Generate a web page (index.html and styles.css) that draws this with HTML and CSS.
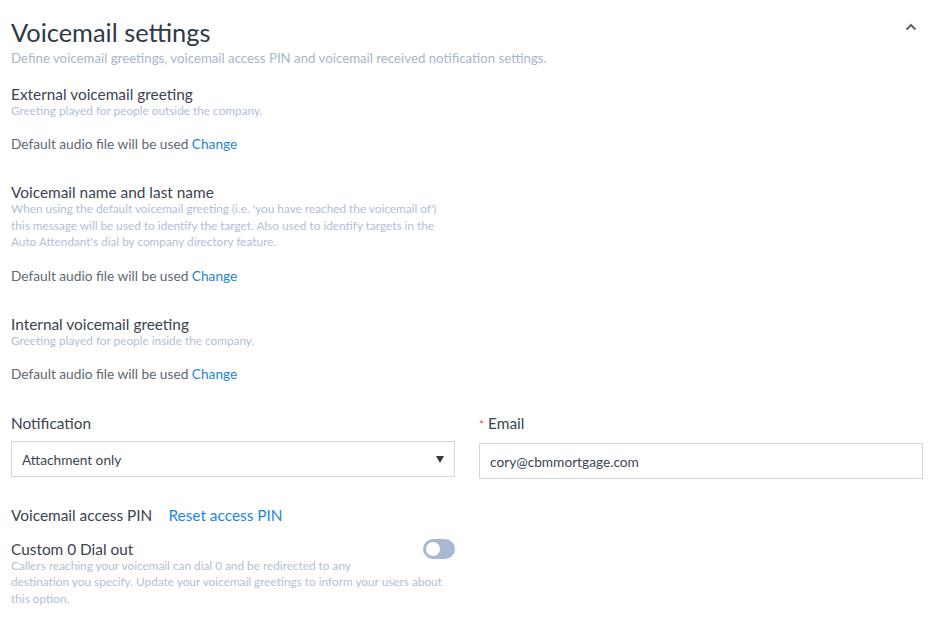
FILE: index.html
```html
<!DOCTYPE html>
<html>
<head>
<meta charset="utf-8">
<link rel="stylesheet" href="styles.css">
</head>
<body>
<div class="page">
  <div class="header">
    <div>
      <h1 class="title">Voicemail settings</h1>
      <p class="subtitle">Define voicemail greetings, voicemail access PIN and voicemail received notification settings.</p>
    </div>
    <svg class="chev" width="14" height="10" viewBox="0 0 14 10"><path d="M2.5 7.5 L7 3 L11.5 7.5" fill="none" stroke="#56677a" stroke-width="2"/></svg>
  </div>

  <div class="section s1">
    <div class="sec-title">External voicemail greeting</div>
    <div class="sec-desc">Greeting played for people outside the company.</div>
    <div class="audio">Default audio file will be used <a class="link">Change</a></div>
  </div>

  <div class="section s2">
    <div class="sec-title">Voicemail name and last name</div>
    <div class="sec-desc">When using the default voicemail greeting (i.e. 'you have reached the voicemail of') this message will be used to identify the target. Also used to identify targets in the Auto Attendant's dial by company directory feature.</div>
    <div class="audio">Default audio file will be used <a class="link">Change</a></div>
  </div>

  <div class="section s3">
    <div class="sec-title">Internal voicemail greeting</div>
    <div class="sec-desc">Greeting played for people inside the company.</div>
    <div class="audio">Default audio file will be used <a class="link">Change</a></div>
  </div>

  <div class="fields">
    <div class="field">
      <div class="label">Notification</div>
      <div class="select"><span>Attachment only</span><span class="caret"></span></div>
    </div>
    <div class="field">
      <div class="label"><span class="req">*</span> Email</div>
      <div class="input">cory@cbmmortgage.com</div>
    </div>
  </div>

  <div class="pin">
    <span>Voicemail access PIN</span>
    <a class="link">Reset access PIN</a>
  </div>

  <div class="dial">
    <div class="dial-top">
      <div class="sec-title">Custom 0 Dial out</div>
      <div class="toggle"><div class="knob"></div></div>
    </div>
    <div class="sec-desc">Callers reaching your voicemail can dial 0 and be redirected to any<br>destination you specify. Update your voicemail greetings to inform your users about this option.</div>
  </div>
</div>
</body>
</html>
```
FILE: styles.css
```css
* { box-sizing: border-box; }
body {
  margin: 0;
  background: #fff;
  font-family: "Lato", "Open Sans", sans-serif;
  color: #3a4452;
}
.page {
  padding: 16px 13px 0 11px;
}
.header {
  display: flex;
  justify-content: space-between;
  align-items: flex-start;
}
.title {
  margin: 0;
  font-size: 25.4px;
  font-weight: 400;
  line-height: 32px;
  color: #2e3947;
}
.subtitle {
  margin: 1px 0 0;
  font-size: 13.25px;
  line-height: 18px;
  color: #a7b6cc;
}
.chev { margin-top: 6px; margin-right: 5px; }
.section { width: 444px; margin-top: 18px; }
.section.s2, .section.s3 { margin-top: 30px; }
.sec-title {
  font-size: 15.4px;
  line-height: 18px;
  color: #3a4452;
}
.sec-desc {
  font-size: 11.8px;
  line-height: 16.4px;
  color: #b2c0d4;
}
.audio {
  margin-top: 16px;
  font-size: 13.7px;
  line-height: 18px;
  color: #5d6874;
}
.link { color: #1e86d8; text-decoration: none; cursor: pointer; }
.fields {
  display: grid;
  grid-template-columns: 444px 444px;
  column-gap: 24px;
  margin-top: 31px;
}
.label {
  font-size: 15.4px;
  line-height: 18px;
  color: #3a4452;
  margin-bottom: 9px;
}
.req { color: #e8474b; font-size: 12px; }
.select, .input {
  height: 36px;
  border: 1px solid #cfd8e4;
  display: flex;
  align-items: center;
  justify-content: space-between;
  padding: 0 10px;
  font-size: 13.7px;
  color: #3c4550;
}
.input { margin-top: 1px; }
.caret {
  width: 0; height: 0;
  border-left: 4.5px solid transparent;
  border-right: 4.5px solid transparent;
  border-top: 7px solid #333b44;
  margin-right: 0;
}
.pin {
  margin-top: 27px;
  font-size: 15.4px;
  line-height: 18px;
  display: flex;
  gap: 16px;
  color: #3a4452;
}
.dial { width: 444px; margin-top: 16px; }
.dial-top { display: flex; justify-content: space-between; align-items: center; height: 18px; }
.toggle {
  width: 32px; height: 20px;
  border-radius: 10px;
  background: #a9b9d1;
  padding: 3px;
}
.knob { width: 14px; height: 14px; border-radius: 50%; background: #fff; }
```
